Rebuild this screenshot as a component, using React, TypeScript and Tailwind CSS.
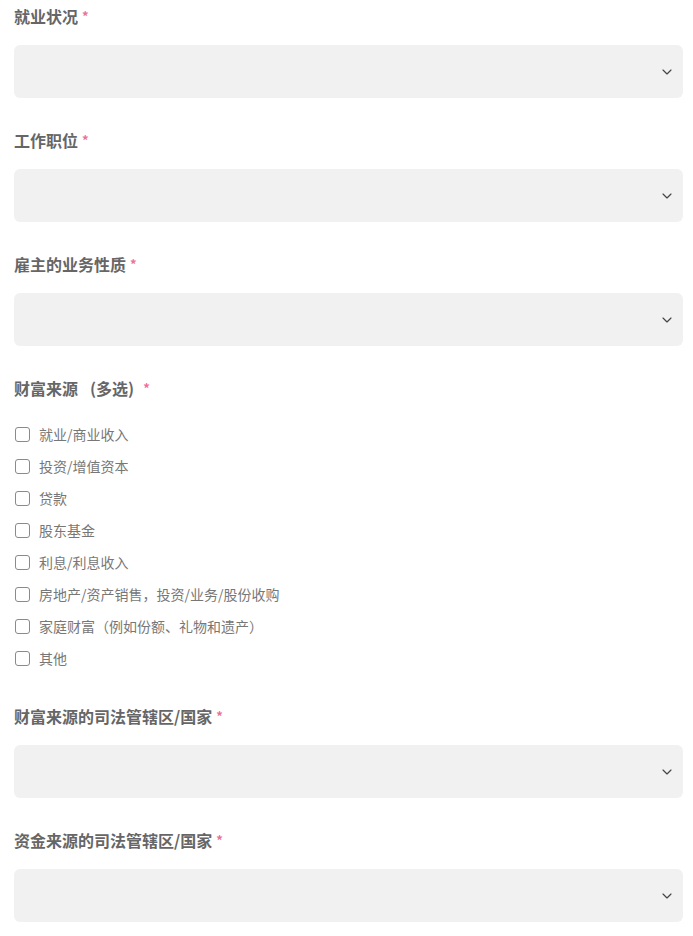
import { ChevronDown } from "lucide-react";

const FONT = { fontFamily: '"Noto Sans CJK SC", "Noto Sans", sans-serif' };

const sources = [
  "就业/商业收入",
  "投资/增值资本",
  "贷款",
  "股东基金",
  "利息/利息收入",
  "房地产/资产销售，投资/业务/股份收购",
  "家庭财富（例如份额、礼物和遗产）",
  "其他",
];

function Label({ text }: { text: string }) {
  return (
    <div className="flex items-center h-[22px] text-[16px] font-bold text-[#666666] mb-[18px]">
      <span>{text}</span>
      <span className="ml-[4px] text-[#f06f9a] text-[13px]">*</span>
    </div>
  );
}

function SelectField({ label }: { label: string }) {
  return (
    <div className="mb-[31px]">
      <Label text={label} />
      <div className="h-[53px] w-full rounded-md bg-[#f1f1f1] flex items-center justify-end pr-[8px]">
        <ChevronDown size={16} strokeWidth={1.75} className="text-[#444444]" />
      </div>
    </div>
  );
}

export default function App() {
  return (
    <div className="bg-white pl-[14px] pr-[10px] pt-[5px] pb-[14px]" style={FONT}>
      <SelectField label="就业状况" />
      <SelectField label="工作职位" />
      <SelectField label="雇主的业务性质" />

      <div className="mb-[31px]">
        <div className="flex items-center h-[22px] text-[16px] font-bold text-[#666666] mb-[19px]">
          <span>财富来源</span>
          <span className="ml-[12px]">(多选)</span>
          <span className="ml-[9px] text-[#f06f9a] text-[13px]">*</span>
        </div>
        <div className="flex flex-col">
          {sources.map((s) => (
            <label key={s} className="flex items-center h-[32px] text-[14px] text-[#777777]">
              <span className="w-[15px] h-[15px] ml-[1px] border border-[#8a8a8a] rounded-[3px] bg-white shrink-0" />
              <span className="ml-[9px]">{s}</span>
            </label>
          ))}
        </div>
      </div>

      <SelectField label="财富来源的司法管辖区/国家" />
      <SelectField label="资金来源的司法管辖区/国家" />
    </div>
  );
}
